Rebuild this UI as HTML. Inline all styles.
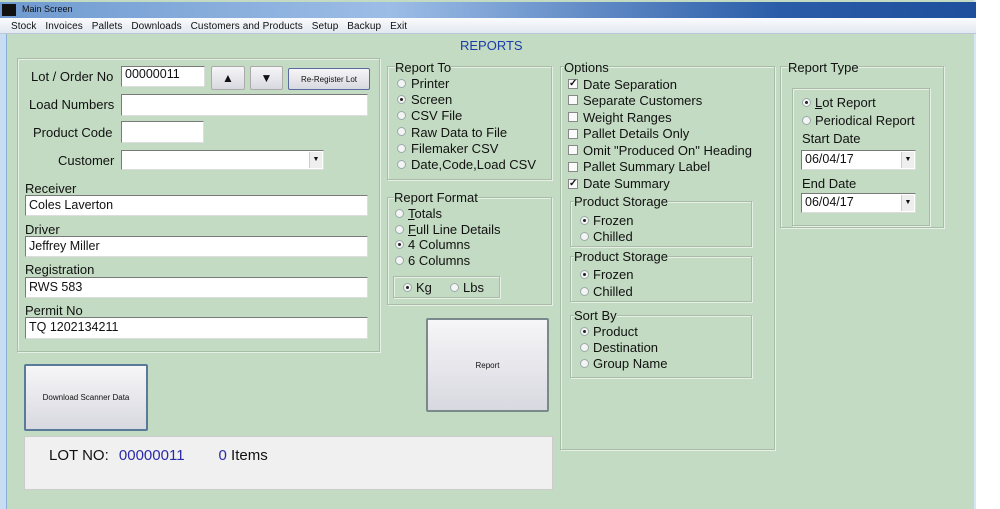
<!DOCTYPE html><html><head><style>
*{box-sizing:border-box;margin:0;padding:0}
body{width:1000px;height:509px;background:#fff;font-family:"Liberation Sans",Arial,sans-serif;position:relative;overflow:hidden;color:#111}
.a{position:absolute}
.t{position:absolute;font-size:13px;white-space:nowrap;line-height:15px}
.in{position:absolute;background:#fff;border:1px solid #7a7a7a;border-right-color:#ddd;border-bottom-color:#ddd;font-size:12.5px;padding:2px 3px;line-height:15px}
.gb{position:absolute;border:1px solid #a8bca8;box-shadow:1px 1px 0 #e6f0e6 inset,1px 1px 0 #e6f0e6}
.r{position:absolute;width:9px;height:9px;border-radius:50%;background:#f4f4f4;border:1px solid #9aa}
.r.on:after{content:"";position:absolute;left:2px;top:2px;width:3px;height:3px;border-radius:50%;background:#222}
.c{position:absolute;width:10px;height:10px;background:#fafafa;border:1px solid #888;font-size:10px;line-height:8px;text-align:center;font-weight:bold}
.btn{position:absolute;border:1px solid #6a7a8a;border-radius:2px;background:linear-gradient(#f6f6f8,#d8d8e0);font-size:8px;text-align:center;display:flex;align-items:center;justify-content:center}
.dd{position:absolute;right:1px;top:1px;bottom:1px;width:13px;background:#eee;border-left:1px solid #ccc;font-size:7px;text-align:center;line-height:16px}
</style></head><body>
<div class="a" style="left:0;top:0;width:976px;height:509px;background:#c3dbc3;border-right:2px solid #d6e6f6"></div>
<div class="a" style="left:0;top:34px;width:7px;height:475px;background:#c8dcf2;border-right:1px solid #8ab0d8"></div>
<div class="a" style="left:0;top:2px;width:976px;height:16px;background:linear-gradient(90deg,#6f9ad0,#9cbde6 40%,#2a5ca8 80%,#1e4f9c)"></div>
<div class="a" style="left:2px;top:4px;width:14px;height:12px;background:#111"></div>
<div class="t" style="left:22px;top:4px;font-size:9px;line-height:11px">Main Screen</div>
<div class="a" style="left:0;top:18px;width:976px;height:16px;background:linear-gradient(#fafbfd,#e2e8f0);border-bottom:1px solid #b8c8d8"></div>
<div class="t" style="left:11px;top:21px;font-size:10px;line-height:11px;word-spacing:6px;letter-spacing:0.1px">Stock Invoices Pallets Downloads <span style="word-spacing:0">Customers and Products</span> Setup Backup Exit</div>
<div class="t" style="left:460px;top:38px;color:#1a3ca8;font-size:13px">REPORTS</div>

<div class="gb" style="left:17px;top:58px;width:363px;height:294px"></div>
<div class="t" style="left:31px;top:69px">Lot / Order No</div>
<div class="in" style="left:121px;top:66px;width:84px;height:21px;padding-top:0">00000011</div>
<div class="btn" style="left:211px;top:66px;width:34px;height:24px;font-size:12px;border-color:#aaa">▲</div>
<div class="btn" style="left:250px;top:66px;width:33px;height:24px;font-size:12px;border-color:#aaa">▼</div>
<div class="btn" style="left:288px;top:68px;width:82px;height:22px;border-color:#5a6aa0">Re-Register Lot</div>
<div class="t" style="left:29px;top:97px">Load Numbers</div>
<div class="in" style="left:121px;top:94px;width:247px;height:22px"></div>
<div class="t" style="left:33px;top:125px">Product Code</div>
<div class="in" style="left:121px;top:121px;width:83px;height:22px"></div>
<div class="t" style="left:58px;top:153px">Customer</div>
<div class="in" style="left:121px;top:150px;width:203px;height:20px"><div class="dd">▼</div></div>
<div class="t" style="left:25px;top:181px">Receiver</div>
<div class="in" style="left:25px;top:195px;width:343px;height:21px">Coles Laverton</div>
<div class="t" style="left:25px;top:222px">Driver</div>
<div class="in" style="left:25px;top:236px;width:343px;height:21px">Jeffrey Miller</div>
<div class="t" style="left:25px;top:262px">Registration</div>
<div class="in" style="left:25px;top:277px;width:343px;height:21px">RWS 583</div>
<div class="t" style="left:25px;top:303px">Permit No</div>
<div class="in" style="left:25px;top:317px;width:343px;height:22px">TQ 1202134211</div>

<div class="btn" style="left:24px;top:364px;width:124px;height:67px;border:2px solid #5a7a9a">Download Scanner Data</div>
<div class="a" style="left:24px;top:436px;width:529px;height:54px;background:#f0f0f0;border:1px solid #ccc"></div>
<div class="t" style="left:49px;top:447px;font-size:15px;line-height:17px">LOT NO: <span style="color:#2a2aa8;margin-left:6px">00000011</span><span style="color:#2a2aa8;margin-left:34px">0</span> Items</div>

<div class="gb" style="left:387px;top:66px;width:165px;height:114px"></div>
<div class="t" style="left:395px;top:60px;background:#c3dbc3">Report To</div>
<div class="r" style="left:397px;top:79px"></div><div class="t" style="left:411px;top:76px">Printer</div>
<div class="r on" style="left:397px;top:95px"></div><div class="t" style="left:411px;top:92px">Screen</div>
<div class="r" style="left:397px;top:111px"></div><div class="t" style="left:411px;top:108px">CSV File</div>
<div class="r" style="left:397px;top:127px"></div><div class="t" style="left:411px;top:125px">Raw Data to File</div>
<div class="r" style="left:397px;top:144px"></div><div class="t" style="left:411px;top:141px">Filemaker CSV</div>
<div class="r" style="left:397px;top:160px"></div><div class="t" style="left:411px;top:157px">Date,Code,Load CSV</div>
<div class="gb" style="left:387px;top:197px;width:165px;height:108px"></div>
<div class="t" style="left:394px;top:190px;background:#c3dbc3">Report Format</div>
<div class="r" style="left:395px;top:209px"></div><div class="t" style="left:408px;top:206px"><u>T</u>otals</div>
<div class="r" style="left:395px;top:225px"></div><div class="t" style="left:408px;top:222px"><u>F</u>ull Line Details</div>
<div class="r on" style="left:395px;top:240px"></div><div class="t" style="left:408px;top:237px">4 Columns</div>
<div class="r" style="left:395px;top:256px"></div><div class="t" style="left:408px;top:253px">6 Columns</div>
<div class="gb" style="left:393px;top:276px;width:107px;height:22px"></div>
<div class="r on" style="left:403px;top:283px"></div><div class="t" style="left:416px;top:280px">Kg</div>
<div class="r" style="left:450px;top:283px"></div><div class="t" style="left:463px;top:280px">Lbs</div>
<div class="btn" style="left:426px;top:318px;width:123px;height:94px;border:2px solid #7a8a8a">Report</div>

<div class="gb" style="left:560px;top:66px;width:215px;height:384px"></div>
<div class="t" style="left:564px;top:60px;background:#c3dbc3">Options</div>
<div class="c" style="left:568px;top:79px">✓</div><div class="t" style="left:583px;top:77px">Date Separation</div>
<div class="c" style="left:568px;top:95px"></div><div class="t" style="left:583px;top:93px">Separate Customers</div>
<div class="c" style="left:568px;top:112px"></div><div class="t" style="left:583px;top:110px">Weight Ranges</div>
<div class="c" style="left:568px;top:129px"></div><div class="t" style="left:583px;top:126px">Pallet Details Only</div>
<div class="c" style="left:568px;top:145px"></div><div class="t" style="left:583px;top:143px">Omit "Produced On" Heading</div>
<div class="c" style="left:568px;top:162px"></div><div class="t" style="left:583px;top:159px">Pallet Summary Label</div>
<div class="c" style="left:568px;top:179px">✓</div><div class="t" style="left:583px;top:176px">Date Summary</div>
<div class="gb" style="left:570px;top:201px;width:182px;height:46px"></div>
<div class="t" style="left:574px;top:194px;background:#c3dbc3">Product Storage</div>
<div class="r on" style="left:580px;top:216px"></div><div class="t" style="left:593px;top:213px">Frozen</div>
<div class="r" style="left:580px;top:232px"></div><div class="t" style="left:593px;top:229px">Chilled</div>
<div class="gb" style="left:570px;top:256px;width:182px;height:46px"></div>
<div class="t" style="left:574px;top:249px;background:#c3dbc3">Product Storage</div>
<div class="r on" style="left:580px;top:270px"></div><div class="t" style="left:593px;top:267px">Frozen</div>
<div class="r" style="left:580px;top:287px"></div><div class="t" style="left:593px;top:284px">Chilled</div>
<div class="gb" style="left:570px;top:315px;width:182px;height:63px"></div>
<div class="t" style="left:574px;top:308px;background:#c3dbc3">Sort By</div>
<div class="r on" style="left:580px;top:327px"></div><div class="t" style="left:593px;top:324px">Product</div>
<div class="r" style="left:580px;top:343px"></div><div class="t" style="left:593px;top:340px">Destination</div>
<div class="r" style="left:580px;top:359px"></div><div class="t" style="left:593px;top:356px">Group Name</div>

<div class="gb" style="left:780px;top:66px;width:164px;height:162px"></div>
<div class="t" style="left:788px;top:60px;background:#c3dbc3">Report Type</div>
<div class="gb" style="left:792px;top:88px;width:138px;height:138px"></div>
<div class="r on" style="left:802px;top:98px"></div><div class="t" style="left:815px;top:95px"><u>L</u>ot Report</div>
<div class="r" style="left:802px;top:116px"></div><div class="t" style="left:815px;top:113px">Periodical Report</div>
<div class="t" style="left:802px;top:131px">Start Date</div>
<div class="in" style="left:801px;top:150px;width:115px;height:20px;padding-top:1px">06/04/17<div class="dd">▼</div></div>
<div class="t" style="left:802px;top:176px">End Date</div>
<div class="in" style="left:801px;top:193px;width:115px;height:20px;padding-top:1px">06/04/17<div class="dd">▼</div></div>
</body></html>
